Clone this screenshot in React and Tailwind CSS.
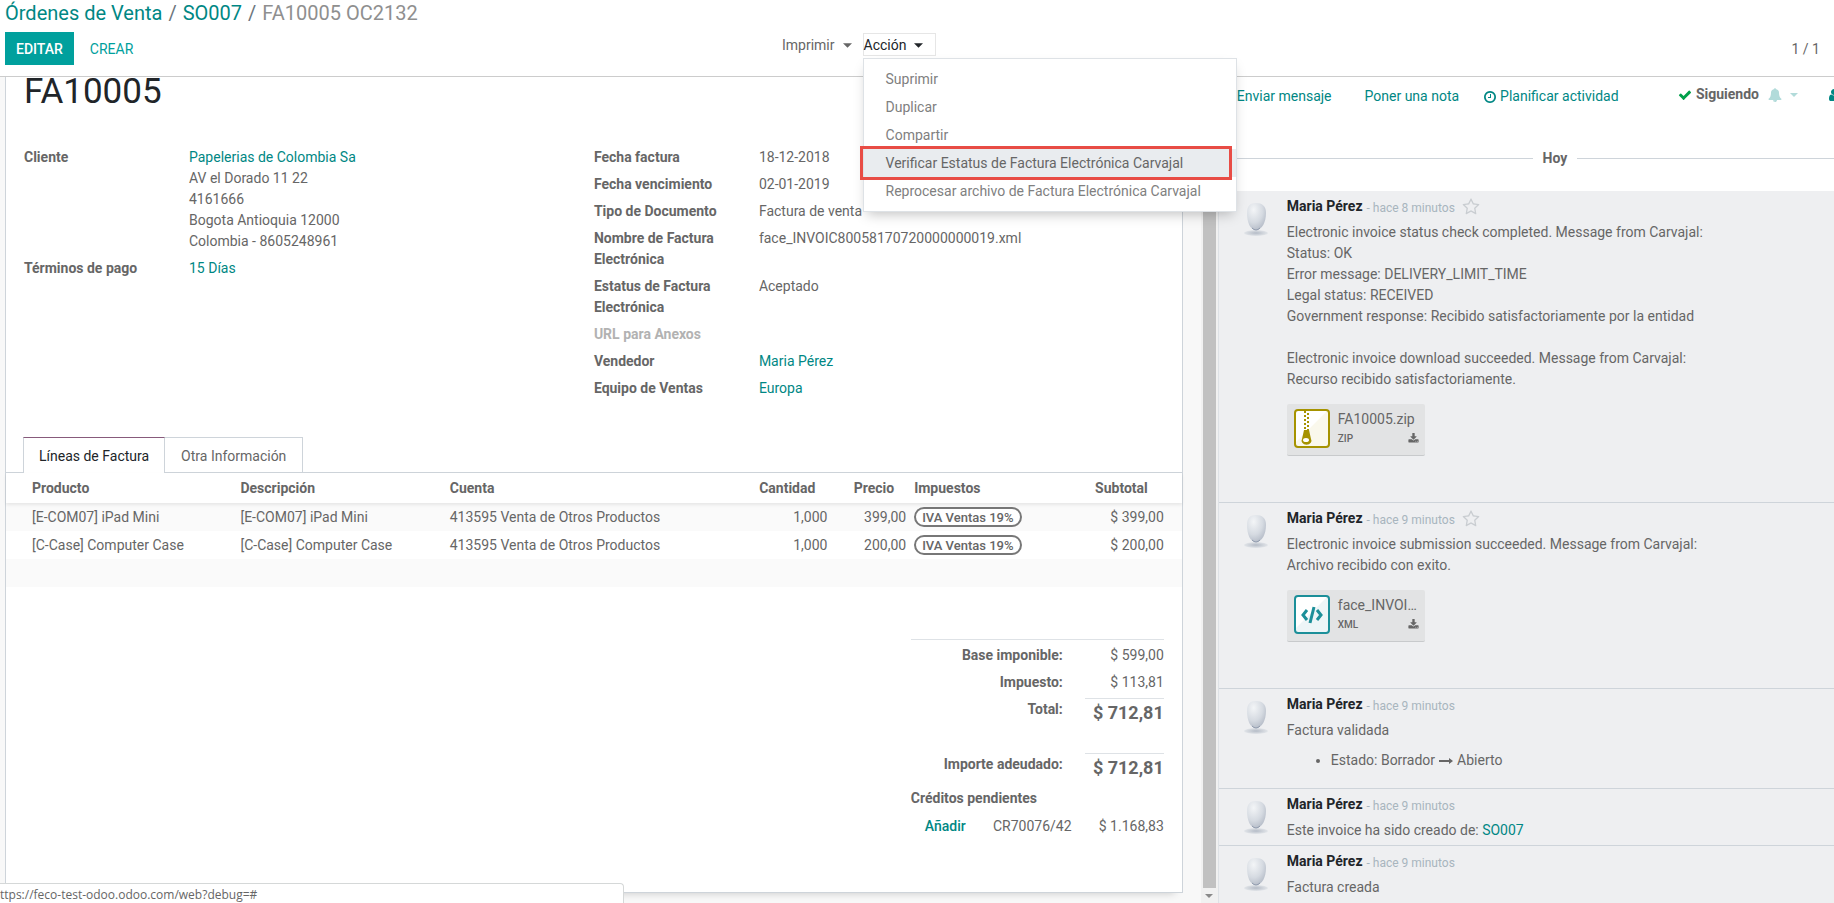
import React, { useState } from 'react';

// --- Icons ---

const Icon = ({ d, className }) => (
    <svg viewBox="0 0 1792 1792" fill="currentColor" aria-hidden="true" className={`shrink-0 ${className}`}>
        <path d={d} />
    </svg>
);

const CLOCK = 'M1024 544v448q0 14-9 23t-23 9h-320q-14 0-23-9t-9-23v-64q0-14 9-23t23-9h224v-352q0-14 9-23t23-9h64q14 0 23 9t9 23zm416 352q0-148-73-273t-198-198-273-73-273 73-198 198-73 273 73 273 198 198 273 73 273-73 198-198 73-273zm224 0q0 209-103 385.5t-279.5 279.5-385.5 103-385.5-103-279.5-279.5-103-385.5 103-385.5 279.5-279.5 385.5-103 385.5 103 279.5 279.5 103 385.5z';
const CHECK = 'M1671 566q0 40-28 68l-724 724-136 136q-28 28-68 28t-68-28l-136-136-362-362q-28-28-28-68t28-68l136-136q28-28 68-28t68 28l294 295 656-657q28-28 68-28t68 28l136 136q28 28 28 68z';
const DOWNLOAD = 'M1344 1344q0-26-19-45t-45-19-45 19-19 45 19 45 45 19 45-19 19-45zm256 0q0-26-19-45t-45-19-45 19-19 45 19 45 45 19 45-19 19-45zm128-224v320q0 40-28 68t-68 28h-1472q-40 0-68-28t-28-68v-320q0-40 28-68t68-28h465l135 136q58 56 136 56t136-56l136-136h464q40 0 68 28t28 68zm-325-569q17 41-14 70l-448 448q-18 19-45 19t-45-19l-448-448q-31-29-14-70 17-39 59-39h256v-448q0-26 19-45t45-19h256q26 0 45 19t19 45v448h256q42 0 59 39z';
const STAR = 'M1201 1004l306-297-422-62-189-382-189 382-422 62 306 297-73 421 378-199 377 199zm527-357q0 22-26 48l-363 354 86 500q1 7 1 20 0 50-41 50-19 0-40-12l-449-236-449 236q-22 12-40 12-21 0-31.5-14.5t-10.5-35.5q0-6 2-20l86-500-364-354q-25-27-25-48 0-37 56-46l502-73 225-455q19-41 49-41t49 41l225 455 502 73q56 9 56 46z';
const BELL = 'M912 1696q0-16-16-16-59 0-101.5-42.5t-42.5-101.5q0-16-16-16t-16 16q0 73 51.5 124.5t124.5 51.5q16 0 16-16zm816-288q0 52-38 90t-90 38h-448q0 106-75 181t-181 75-181-75-75-181h-448q-52 0-90-38t-38-90q50-42 91-88t85-119.5 74.5-158.5 50-206 19.5-260q0-152 117-282.5t307-158.5q-8-19-8-39 0-40 28-68t68-28 68 28 28 68q0 20-8 39 190 28 307 158.5t117 282.5q0 139 19.5 260t50 206 74.5 158.5 85 119.5 91 88z';
const USER = 'M1536 1399q0 109-62.5 187t-150.5 78h-854q-88 0-150.5-78t-62.5-187q0-85 8.5-160.5t31.5-152 58.5-131 94-89 134.5-34.5q131 128 313 128t313-128q76 0 134.5 34.5t94 89 58.5 131 31.5 152 8.5 160.5zm-256-887q0 159-112.5 271.5t-271.5 112.5-271.5-112.5-112.5-271.5 112.5-271.5 271.5-112.5 271.5 112.5 112.5 271.5z';

const Caret = ({ className }) => (
    <svg viewBox="0 0 10 5" fill="currentColor" aria-hidden="true" className={`shrink-0 ${className}`}>
        <path d="M0 0h10L5 5z" />
    </svg>
);

const Arrow = () => (
    <svg viewBox="0 0 14 8" fill="currentColor" aria-hidden="true" className="inline-block w-[14px] h-2 mx-1 align-middle">
        <path d="M0 3h10V1l4 3-4 3V5H0z" />
    </svg>
);

const Avatar = () => (
    <svg viewBox="0 0 24 34" aria-hidden="true" className="w-6 h-[34px] shrink-0">
        <defs>
            <radialGradient id="head" cx="0.35" cy="0.25" r="0.8">
                <stop offset="0" stopColor="#f3f5f7" />
                <stop offset="0.6" stopColor="#d5dae1" />
                <stop offset="1" stopColor="#b3bac6" />
            </radialGradient>
            <radialGradient id="base">
                <stop offset="0" stopColor="#b4bbc6" />
                <stop offset="1" stopColor="#e2e5e9" />
            </radialGradient>
        </defs>
        <ellipse cx="12" cy="30" rx="12" ry="3" fill="url(#base)" />
        <path d="M3 10C3 3 6 0 12 0s10 3 10 10c0 9-4 17-10 17S3 19 3 10z" fill="url(#head)" />
        <path d="M8 25q4 4 8 0" fill="none" stroke="#8f9aad" />
    </svg>
);

const ZipIcon = () => (
    <svg viewBox="0 0 36 40" aria-hidden="true" className="w-9 h-10 shrink-0">
        <rect x="1" y="1" width="34" height="37" rx="3" fill="#faf8ec" />
        <path d="M2 2h31L2 33z" fill="#fff" />
        <rect x="1" y="1" width="34" height="37" rx="3" fill="none" stroke="#a69300" strokeWidth="2" />
        <path d="M11 2v19" stroke="#a69300" strokeWidth="2" strokeDasharray="2 2" />
        <path d="M14 4v17" stroke="#a69300" strokeWidth="2" strokeDasharray="2 2" />
        <path d="M10 21h5l2 9a5 4 0 1 1-9 0z" fill="#a69300" />
        <ellipse cx="12" cy="31" rx="3" ry="2" fill="#fff" />
    </svg>
);

const XmlIcon = () => (
    <svg viewBox="0 0 36 40" aria-hidden="true" className="w-9 h-10 shrink-0">
        <rect x="1" y="1" width="34" height="37" rx="3" fill="#edf5f7" />
        <path d="M2 2h31L2 33z" fill="#fff" />
        <rect x="1" y="1" width="34" height="37" rx="3" fill="none" stroke="#1c8f99" strokeWidth="2" />
        <path d="M13 15l-4 5 4 5M23 15l4 5-4 5M20 12l-4 16" fill="none" stroke="#1c8f99" strokeWidth="3" />
    </svg>
);

// --- Data ---

const actions = [
    'Suprimir',
    'Duplicar',
    'Compartir',
    'Verificar Estatus de Factura Electrónica Carvajal',
    'Reprocesar archivo de Factura Electrónica Carvajal',
];

const lines = [
    { product: '[E-COM07] iPad Mini', account: '413595 Venta de Otros Productos', qty: '1,000', price: '399,00', tax: 'IVA Ventas 19%', subtotal: '$ 399,00' },
    { product: '[C-Case] Computer Case', account: '413595 Venta de Otros Productos', qty: '1,000', price: '200,00', tax: 'IVA Ventas 19%', subtotal: '$ 200,00' },
];

// --- Form pieces ---

const Link = ({ children, className = '' }) => (
    <a href="#" className={`text-[#008784] ${className}`}>{children}</a>
);

const Field = ({ label, children, muted = false }) => (
    <div className="grid grid-cols-[165px_1fr]">
        <dt className={`font-bold pr-4 ${muted ? 'text-[#b2b2b2]' : ''}`}>{label}</dt>
        <dd>{children}</dd>
    </div>
);

const ActionMenu = () => (
    <ul className="absolute top-6 -left-px z-20 w-[374px] py-[6px] bg-white border border-[#dee2e6] shadow-[0_6px_12px_-4px_rgba(0,0,0,0.25)] text-[#808080]">
        {actions.map((action, index) => (
            <li key={action} className="relative">
                <button type="button" className={`block w-full h-7 pl-[22px] text-left whitespace-nowrap ${index === 3 ? 'bg-[#e9ecef] text-[#666]' : ''}`}>
                    {action}
                </button>
                {index === 3 && <span className="absolute -inset-y-[3px] -left-1 right-1 border-3 border-[#e84c45] pointer-events-none" />}
            </li>
        ))}
    </ul>
);

const ControlPanel = () => (
    <header className="h-[77px] shrink-0 border-b border-[#ccc] bg-white">
        <nav className="h-8 pl-[5px] pt-[1px] text-[20px] leading-6 text-[#6c757d]">
            <Link>Órdenes de Venta</Link>
            <span className="px-[6px]">/</span>
            <Link>SO007</Link>
            <span className="px-[6px]">/</span>
            <span className="text-[#8f8f8f]">FA10005 OC2132</span>
        </nav>
        <div className="flex items-start pl-[5px] pr-[14px]">
            <div className="flex w-[777px] font-medium">
                <button type="button" className="h-[33px] px-[11px] pt-px bg-[#00a09d] text-white">EDITAR</button>
                <button type="button" className="h-[33px] px-4 pt-px text-[#00a09d] font-normal">CREAR</button>
            </div>
            <button type="button" className="flex items-center gap-2 h-[26px] pt-px">
                Imprimir <Caret className="w-[9px] h-[5px]" />
            </button>
            <div className="relative ml-[11px] mt-px border border-[#e6e6e6] text-[#212529]">
                <button type="button" className="flex items-center gap-2 w-[71px] h-[21px] pt-px">
                    Acción <Caret className="w-[9px] h-[5px]" />
                </button>
                <ActionMenu />
            </div>
            <span className="ml-auto pt-[7px]">1 / 1</span>
        </div>
    </header>
);

const InvoiceLines = () => (
    <table className="w-full table-fixed text-left">
        <colgroup>
            <col className="w-[19.6%]" />
            <col className="w-[17.8%]" />
            <col className="w-[24.3%]" />
            <col className="w-[8.5%]" />
            <col className="w-[6.7%]" />
            <col className="w-[12%]" />
            <col />
        </colgroup>
        <thead>
            <tr className="h-[30px] shadow-[0_2px_3px_rgba(0,0,0,0.08)] relative">
                <th className="pl-[26px]">Producto</th>
                <th className="pl-1">Descripción</th>
                <th className="pl-1">Cuenta</th>
                <th className="pr-4 text-right">Cantidad</th>
                <th className="pr-4 text-right">Precio</th>
                <th className="pl-1">Impuestos</th>
                <th className="pr-[34px] text-right">Subtotal</th>
            </tr>
        </thead>
        <tbody>
            {lines.map((line) => (
                <tr key={line.product} className="h-7 odd:bg-[#fafafa]">
                    <td className="pl-[26px]">{line.product}</td>
                    <td className="pl-1">{line.product}</td>
                    <td className="pl-1">{line.account}</td>
                    <td className="pr-1 text-right">{line.qty}</td>
                    <td className="pr-1 text-right">{line.price}</td>
                    <td className="pl-1">
                        <span className="flex items-center w-fit h-5 px-[6px] rounded-full border-2 border-[#777] bg-white text-[13px] font-medium">{line.tax}</span>
                    </td>
                    <td className="pr-[18px] text-right">{line.subtotal}</td>
                </tr>
            ))}
            <tr className="h-7 bg-[#fafafa]"><td colSpan={7} /></tr>
        </tbody>
    </table>
);

const Totals = () => (
    <div className="w-[253px] ml-auto mr-[18px] mt-[52px] border-t border-[#dee2e6]">
        <dl className="grid grid-cols-[152px_79px] gap-x-[22px] text-right">
            <dt className="font-bold h-[27px] pt-[5px]">Base imponible:</dt>
            <dd className="pt-[5px]">$ 599,00</dd>
            <dt className="font-bold h-[27px] pt-[5px]">Impuesto:</dt>
            <dd className="pt-[5px]">$ 113,81</dd>
            <dt className="font-bold h-[55px] pt-[5px]">Total:</dt>
            <dd className="flex flex-col pt-1"><b className="border-t border-[#dee2e6] pt-[3px] text-lg leading-[22px]">$ 712,81</b></dd>
            <dt className="font-bold h-[39px] pt-[5px]">Importe adeudado:</dt>
            <dd className="flex flex-col pt-1"><b className="border-t border-[#dee2e6] pt-[3px] text-lg leading-[22px]">$ 712,81</b></dd>
        </dl>
        <h4 className="font-bold">Créditos pendientes</h4>
        <div className="flex justify-between pl-[14px] pt-[7px]">
            <Link className="font-medium">Añadir</Link>
            <span>CR70076/42</span>
            <span>$ 1.168,83</span>
        </div>
    </div>
);

const Sheet = () => {
    const [tab, setTab] = useState('lines');
    const tabClass = (name) => (tab === name
        ? 'bg-white border-t-[#875a7b] text-[#212529] -mb-px h-9'
        : 'h-[35px]');

    return (
        <main className="flex flex-1 min-w-0 bg-[#f8f8f8]">
            <div className="flex flex-col flex-1 min-w-0 pl-[5px] pr-[18px] pb-[10px]">
                <div className="flex-1 bg-white border border-t-0 border-[#ced4da] shadow-[0_8px_8px_-8px_rgba(0,0,0,0.2)]">
                    <div className="px-[18px]">
                        <h1 className="text-[35px] leading-[30px] text-[#212529]">FA10005</h1>
                        <div className="grid grid-cols-2 pt-10">
                            <dl className="flex flex-col gap-[6px]">
                                <Field label="Cliente">
                                    <Link>Papelerias de Colombia Sa</Link><br />
                                    AV el Dorado 11 22<br />
                                    4161666<br />
                                    Bogota Antioquia 12000<br />
                                    Colombia - 8605248961
                                </Field>
                                <Field label="Términos de pago"><Link>15 Días</Link></Field>
                            </dl>
                            <dl className="flex flex-col gap-[6px]">
                                <Field label="Fecha factura">18-12-2018</Field>
                                <Field label="Fecha vencimiento">02-01-2019</Field>
                                <Field label="Tipo de Documento">Factura de venta</Field>
                                <Field label="Nombre de Factura Electrónica">face_INVOIC80058170720000000019.xml</Field>
                                <Field label="Estatus de Factura Electrónica">Aceptado</Field>
                                <Field label="URL para Anexos" muted />
                                <Field label="Vendedor"><Link>Maria Pérez</Link></Field>
                                <Field label="Equipo de Ventas"><Link>Europa</Link></Field>
                            </dl>
                        </div>
                    </div>
                    <div role="tablist" className="flex items-start mt-[38px] pl-[17px] border-b border-[#ced4da]">
                        <button type="button" role="tab" aria-selected={tab === 'lines'} onClick={() => setTab('lines')} className={`relative px-[15px] pt-[2px] border border-b-0 border-[#ced4da] ${tabClass('lines')}`}>
                            Líneas de Factura
                        </button>
                        <button type="button" role="tab" aria-selected={tab === 'other'} onClick={() => setTab('other')} className={`relative px-4 pt-[2px] border border-b-0 border-l-0 border-[#ced4da] ${tabClass('other')}`}>
                            Otra Información
                        </button>
                    </div>
                    <InvoiceLines />
                    <Totals />
                </div>
            </div>
            {/* scroll bar of the form */}
            <div className="flex flex-col items-center w-[17px] bg-[#f1f1f1]">
                <div className="flex-1 w-[13px] bg-[#c1c1c1]" />
                <div className="flex items-center h-[15px] text-[#8a8a8a]"><Caret className="w-2 h-1" /></div>
            </div>
        </main>
    );
};

// --- Chatter ---

const Attachment = ({ icon, name, type }) => (
    <div className="flex w-[138px] h-[52px] mt-[14px] mb-[46px] pt-[5px] pl-[7px] pr-[6px] gap-2 bg-[#e2e3e4] border-b border-[#c8cacc] rounded-xs">
        {icon}
        <div className="flex-1 min-w-0">
            <div className="leading-5 whitespace-nowrap">{name}</div>
            <div className="flex items-center justify-between h-[18px] text-[10px] font-medium">
                {type}
                <button type="button" aria-label="Descargar"><Icon d={DOWNLOAD} className="w-[11px] h-[11px]" /></button>
            </div>
        </div>
    </div>
);

const Message = ({ time, starred = false, children, className = '' }) => (
    <article className={`flex pt-[5px] pl-[25px] border-b border-[#ced4da] last:border-b-0 ${className}`}>
        <div className="w-[43px] pt-[7px] shrink-0"><Avatar /></div>
        <div className="flex-1 min-w-0 pr-4">
            <div className="flex items-center h-[21px] mb-[5px]">
                <b className="text-[#212529]">Maria Pérez</b>
                <span className="pl-1 pt-[2px] text-xs text-[#a8b5be]">- {time}</span>
                {starred && (
                    <button type="button" aria-label="Destacar" className="ml-[7px] text-[#c9cdd1]"><Icon d={STAR} className="w-[18px] h-[18px]" /></button>
                )}
            </div>
            {children}
        </div>
    </article>
);

const Chatter = () => (
    <aside className="flex flex-col w-[33.6%] shrink-0 overflow-hidden bg-white border-l border-[#dee2e6]">
        <div className="flex items-start h-[70px] pt-[7px] pl-[18px] whitespace-nowrap">
            <div className="flex items-center pt-[2px]">
                <Link>Enviar mensaje</Link>
                <Link className="ml-[33px]">Poner una nota</Link>
                <Link className="flex items-center gap-[3px] ml-6"><Icon d={CLOCK} className="w-[14px] h-[14px]" /> Planificar actividad</Link>
            </div>
            <div className="flex items-center ml-auto">
                <button type="button" className="flex items-center gap-1 font-bold"><Icon d={CHECK} className="w-[14px] h-[14px] text-[#00a04a]" /> Siguiendo</button>
                <button type="button" aria-label="Seguimiento" className="flex items-center gap-2 ml-[9px] text-[#b2dbda]">
                    <Icon d={BELL} className="w-[14px] h-[14px]" />
                    <Caret className="w-2 h-1" />
                </button>
                <button type="button" aria-label="Seguidores" className="w-[7px] ml-[29px] overflow-hidden text-[#008784]"><Icon d={USER} className="w-[14px] h-[14px]" /></button>
            </div>
        </div>
        <div className="flex items-center h-[22px]">
            <span className="w-[51%] h-px bg-[#ced4da]" />
            <b className="px-[10px]">Hoy</b>
            <span className="flex-1 h-px bg-[#ced4da]" />
        </div>
        <div className="flex-1 mt-[22px] bg-[#eeeff1]">
            <Message time="hace 8 minutos" starred>
                <p>
                    Electronic invoice status check completed. Message from Carvajal:<br />
                    Status: OK<br />
                    Error message: DELIVERY_LIMIT_TIME<br />
                    Legal status: RECEIVED<br />
                    Government response: Recibido satisfactoriamente por la entidad
                </p>
                <p className="mt-[21px]">
                    Electronic invoice download succeeded. Message from Carvajal:<br />
                    Recurso recibido satisfactoriamente.
                </p>
                <Attachment icon={<ZipIcon />} name="FA10005.zip" type="ZIP" />
            </Message>
            <Message time="hace 9 minutos" starred>
                <p>
                    Electronic invoice submission succeeded. Message from Carvajal:<br />
                    Archivo recibido con exito.
                </p>
                <Attachment icon={<XmlIcon />} name="face_INVOI…" type="XML" />
            </Message>
            <Message time="hace 9 minutos" className="pb-[17px]">
                <p>Factura validada</p>
                <ul className="mt-[9px] pl-11 list-disc">
                    <li>Estado: Borrador<Arrow />Abierto</li>
                </ul>
            </Message>
            <Message time="hace 9 minutos" className="pb-1">
                <p>Este invoice ha sido creado de: <Link>SO007</Link></p>
            </Message>
            <Message time="hace 9 minutos">
                <p>Factura creada</p>
            </Message>
        </div>
    </aside>
);

const App = () => (
    <div className="relative flex flex-col min-h-screen overflow-hidden bg-white font-[Roboto,sans-serif] text-sm leading-[21px] text-[#666]">
        <ControlPanel />
        <div className="flex flex-1">
            <Sheet />
            <Chatter />
        </div>
        {/* browser status bubble */}
        <div className="absolute bottom-0 left-0 w-[34%] h-5 overflow-hidden bg-white border-t border-r border-[#d5d8d8] rounded-tr-sm font-['Open_Sans',sans-serif] text-xs leading-[22px] whitespace-nowrap">
            ttps://feco-test-odoo.odoo.com/web?debug=#
        </div>
    </div>
);

export default App;
